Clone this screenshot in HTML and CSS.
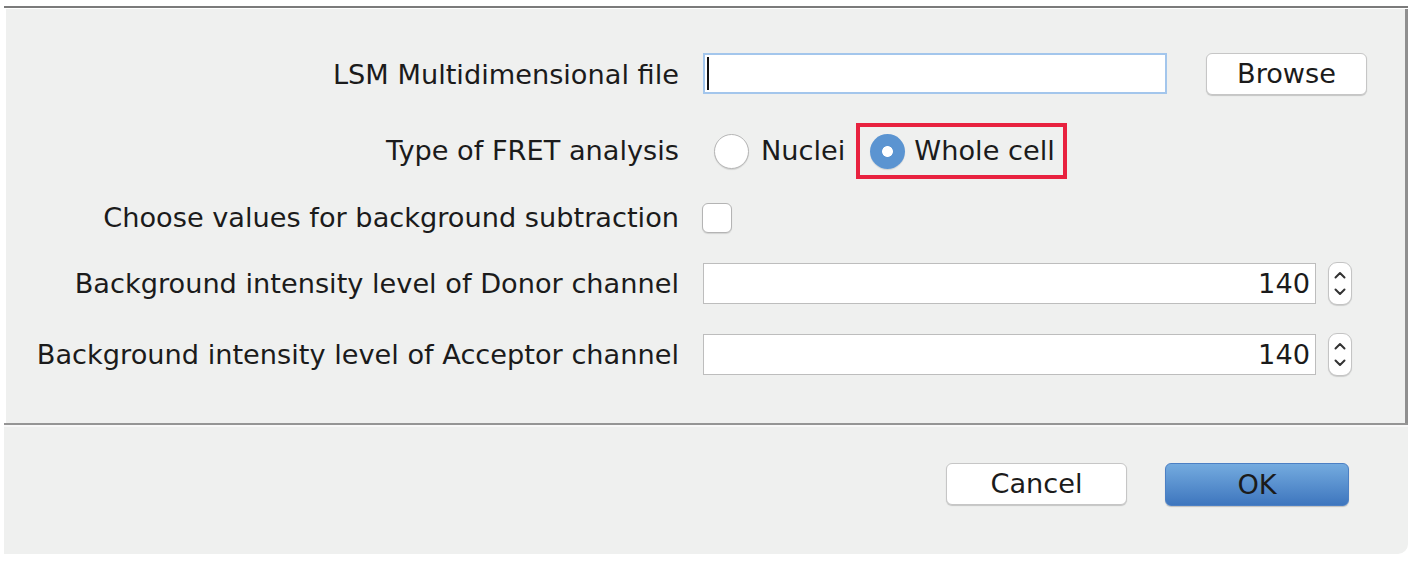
FILE: index.html
```html
<!DOCTYPE html>
<html>
<head>
<meta charset="utf-8">
<link rel="stylesheet" href="styles.css">
</head>
<body>
<div class="window">
  <div class="topline"></div>
  <div class="top">
    <div class="row r1">
      <div class="label">LSM Multidimensional file</div>
      <div class="ctrl">
        <div class="field focus"><span class="caret"></span></div>
        <button class="btn browse">Browse</button>
      </div>
    </div>
    <div class="row r2">
      <div class="label">Type of FRET analysis</div>
      <div class="ctrl">
        <span class="radio"></span><span class="rlabel">Nuclei</span>
        <span class="mark"><span class="radio on"></span><span class="rlabel">Whole cell</span></span>
      </div>
    </div>
    <div class="row r3">
      <div class="label">Choose values for background subtraction</div>
      <div class="ctrl"><span class="check"></span></div>
    </div>
    <div class="row r4">
      <div class="label">Background intensity level of Donor channel</div>
      <div class="ctrl">
        <div class="field num">140</div>
        <span class="spin"><svg width="24" height="43" viewBox="0 0 24 43"><path d="M7.5 15.5 L12 11 L16.5 15.5" fill="none" stroke="#333" stroke-width="2" stroke-linecap="round" stroke-linejoin="round"/><path d="M7.5 27.5 L12 32 L16.5 27.5" fill="none" stroke="#333" stroke-width="2" stroke-linecap="round" stroke-linejoin="round"/></svg></span>
      </div>
    </div>
    <div class="row r5">
      <div class="label">Background intensity level of Acceptor channel</div>
      <div class="ctrl">
        <div class="field num">140</div>
        <span class="spin"><svg width="24" height="43" viewBox="0 0 24 43"><path d="M7.5 15.5 L12 11 L16.5 15.5" fill="none" stroke="#333" stroke-width="2" stroke-linecap="round" stroke-linejoin="round"/><path d="M7.5 27.5 L12 32 L16.5 27.5" fill="none" stroke="#333" stroke-width="2" stroke-linecap="round" stroke-linejoin="round"/></svg></span>
      </div>
    </div>
  </div>
  <div class="sep"></div>
  <div class="bottom">
    <button class="btn cancel">Cancel</button>
    <button class="btn ok">OK</button>
  </div>
</div>
</body>
</html>
```
FILE: styles.css
```css
html, body { margin: 0; padding: 0; background: #ffffff; }
body {
  font-family: "DejaVu Sans", "Liberation Sans", sans-serif;
  font-size: 27.2px;
  color: #1b1b1b;
}
.window { margin: 6px 0 0 4px; width: 1404px; }
.topline { height: 2px; background: #7b7b7b; margin-bottom: 1px; }
.top {
  margin-left: 2px;
  height: 414px;
  box-sizing: border-box;
  background: #eff0ef;
  border-right: 3px solid #8f8f8f;
  padding-top: 43px;
}
.row {
  display: grid;
  grid-template-columns: 673px 1fr;
  column-gap: 24px;
  align-items: center;
}
.r1 { height: 43px; }
.r1 .label { padding-top: 3px; }
.r2 { height: 36px; margin-top: 38px; }
.r3 { height: 30px; margin-top: 34px; }
.r4 { height: 43px; margin-top: 29px; }
.r5 { height: 43px; margin-top: 28px; }
.label { text-align: right; white-space: nowrap; line-height: 1; }
.ctrl { display: flex; align-items: center; height: 100%; }
.field {
  box-sizing: border-box;
  height: 41px;
  background: #fff;
  border: 1px solid #bdbdbd;
}
.field.focus {
  width: 464px;
  border: 2px solid #a3c6ec;
  display: flex;
  align-items: center;
  padding-left: 2px;
}
.caret { width: 2px; height: 33px; background: #111; }
.field.num {
  width: 613px;
  text-align: right;
  padding-right: 5px;
  line-height: 40px;
}
.btn {
  font-family: inherit;
  font-size: 27.2px;
  color: #1b1b1b;
  box-sizing: border-box;
  height: 42px;
  border-radius: 6px;
  background: #fff;
  border: 1px solid #c6c6c6;
  box-shadow: 0 1px 1px rgba(0,0,0,0.18);
  padding: 0;
  line-height: 1;
}
.browse { width: 161px; margin-left: 39px; }
.radio {
  box-sizing: border-box;
  width: 35px; height: 35px;
  border-radius: 50%;
  background: #fff;
  border: 1px solid #b6b6b6;
  box-shadow: 0 1px 1px rgba(0,0,0,0.12);
  margin-left: 11px;
  flex: none;
}
.radio.on {
  margin-left: 0;
  border: none;
  background: radial-gradient(circle, #ffffff 0 5px, #5b94d1 5.8px);
}
.rlabel { margin-left: 12px; line-height: 1; white-space: nowrap; }
.mark {
  display: flex;
  align-items: center;
  box-sizing: border-box;
  height: 56px;
  margin: -10px 0 -10px 11px;
  border: 4px solid #e8223f;
  padding: 0 8px 0 10px;
}
.mark .rlabel { margin-left: 9px; }
.check {
  box-sizing: border-box;
  width: 30px; height: 30px;
  border-radius: 6px;
  background: #fff;
  border: 1px solid #b4b4b4;
  box-shadow: 0 1px 1px rgba(0,0,0,0.12);
  margin-left: -1px;
}
.spin {
  box-sizing: border-box;
  width: 24px; height: 43px;
  margin-left: 12px;
  border-radius: 9px;
  background: #fff;
  border: 1px solid #c4c4c4;
  box-shadow: 0 1px 1px rgba(0,0,0,0.15);
  display: flex;
  justify-content: center;
  align-items: center;
}
.spin svg { display: block; margin: -1px; }
.sep { height: 2px; background: #959595; }
.bottom {
  height: 129px;
  box-sizing: border-box;
  border-top: 2px solid #f8f8f8;
  background: #eff0ef;
  border-bottom-right-radius: 10px;
  display: flex;
  justify-content: flex-end;
  align-items: flex-start;
  padding: 36px 59px 0 0;
}
.cancel { width: 181px; }
.ok {
  width: 184px;
  margin-left: 38px;
  height: 43px;
  border: 1px solid #4c80c4;
  background: linear-gradient(#74abdf, #3e76be);
  box-shadow: 0 1px 1px rgba(0,0,0,0.2);
}
```
